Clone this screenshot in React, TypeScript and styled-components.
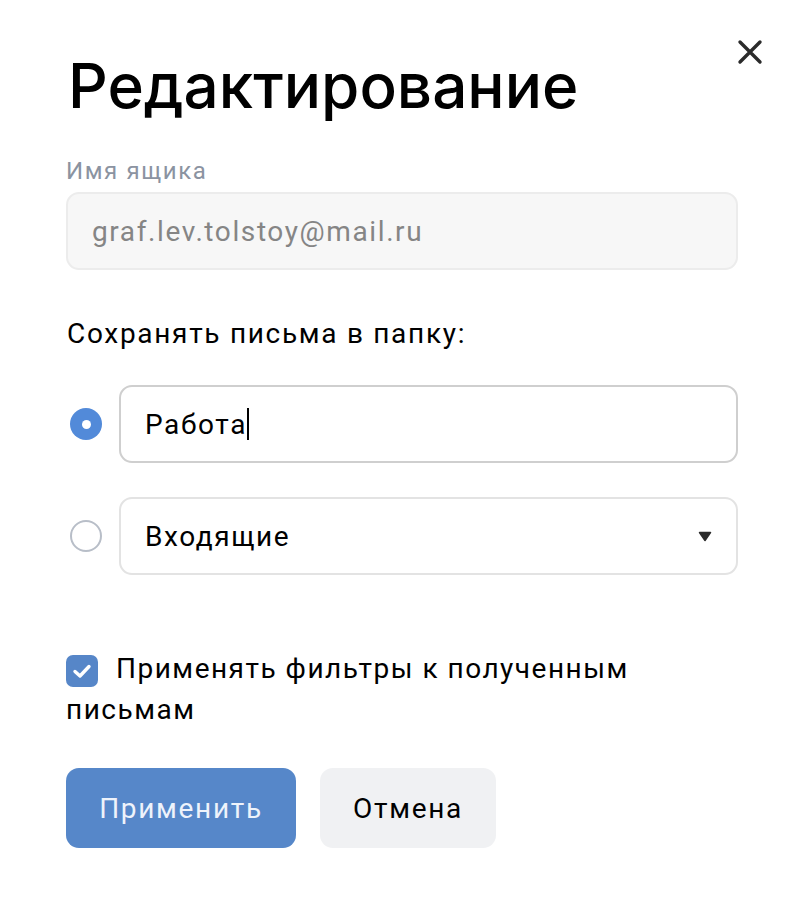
import React from "react";
import styled, { createGlobalStyle } from "styled-components";

const Global = createGlobalStyle`
  html, body { margin: 0; padding: 0; background: #ffffff; }
  body { font-family: Roboto, "Noto Sans", sans-serif; color: #000; }
  * { box-sizing: border-box; }
`;

const Dialog = styled.div`
  position: relative;
  width: 806px;
  height: 908px;
  padding: 46px 68px 0 66px;
  display: flex;
  flex-direction: column;
`;

const Close = styled.button`
  position: absolute;
  top: 38px;
  right: 42px;
  width: 28px;
  height: 28px;
  padding: 0;
  border: none;
  background: none;
  display: flex;
  align-items: center;
  justify-content: center;
`;

const Title = styled.h1`
  margin: 0 0 0 2px;
  font-family: Inter, Roboto, sans-serif;
  font-weight: 500;
  font-size: 62px;
  line-height: 80px;
  letter-spacing: 0;
  color: #000;
`;

const Label = styled.div`
  margin: 30px 0 0 0;
  font-size: 24px;
  line-height: 30px;
  letter-spacing: 1.6px;
  color: #8b93a1;
`;

const Field = styled.div<{ $variant?: "disabled" | "active" | "plain" }>`
  height: 78px;
  border-radius: 13px;
  display: flex;
  align-items: center;
  padding: 0 24px;
  font-size: 28px;
  letter-spacing: 1.6px;
  flex: 1;
  background: ${(p) => (p.$variant === "disabled" ? "#f7f7f7" : "#fff")};
  border: 2px solid
    ${(p) =>
      p.$variant === "disabled" ? "#ececec" : p.$variant === "active" ? "#cfcfcf" : "#e3e3e3"};
  color: ${(p) => (p.$variant === "disabled" ? "#858585" : "#000")};
`;

const EmailField = styled(Field)`
  margin-top: 6px;
  flex: none;
`;

const Section = styled.div`
  margin: 47px 0 0 1px;
  font-size: 28px;
  line-height: 34px;
  letter-spacing: 1.7px;
`;

const Options = styled.div`
  margin-top: 34px;
  display: flex;
  flex-direction: column;
  gap: 34px;
`;

const OptionRow = styled.div`
  display: flex;
  align-items: center;
  gap: 17px;
  padding-left: 4px;
`;

const Radio = styled.span<{ $checked?: boolean }>`
  width: 32px;
  height: 32px;
  border-radius: 50%;
  flex: none;
  display: flex;
  align-items: center;
  justify-content: center;
  background: ${(p) => (p.$checked ? "#528ad9" : "#fff")};
  border: ${(p) => (p.$checked ? "none" : "2px solid #b8bec8")};
  &::after {
    content: "";
    width: 9px;
    height: 9px;
    border-radius: 50%;
    background: #fff;
    display: ${(p) => (p.$checked ? "block" : "none")};
  }
`;

const Caret = styled.span`
  display: inline-block;
  width: 2px;
  height: 32px;
  background: #000;
  margin-left: 0;
`;

const Spacer = styled.span`
  flex: 1;
`;

const Filter = styled.div`
  margin-top: 73px;
  font-size: 28px;
  line-height: 41px;
  letter-spacing: 1.5px;
`;

const Check = styled.span`
  display: inline-flex;
  vertical-align: -2px;
  width: 32px;
  height: 32px;
  border-radius: 7px;
  background: #5686c8;
  align-items: center;
  justify-content: center;
  margin-right: 18px;
`;

const Buttons = styled.div`
  margin-top: 38px;
  display: flex;
  gap: 24px;
`;

const Button = styled.button<{ $primary?: boolean }>`
  height: 80px;
  border: none;
  border-radius: 13px;
  font-family: Roboto, sans-serif;
  font-size: 28px;
  letter-spacing: 1.7px;
  padding: 0;
  background: ${(p) => (p.$primary ? "#5687c9" : "#f0f1f3")};
  color: ${(p) => (p.$primary ? "#eef3fb" : "#000")};
  width: ${(p) => (p.$primary ? "230px" : "176px")};
`;

export default function App() {
  return (
    <>
      <Global />
      <Dialog>
        <Close aria-label="close">
          <svg width="26" height="26" viewBox="0 0 26 26">
            <path d="M3 3 L23 23 M23 3 L3 23" stroke="#2b2b2b" strokeWidth="3.4" strokeLinecap="round" />
          </svg>
        </Close>
        <Title>Редактирование</Title>
        <Label>Имя ящика</Label>
        <EmailField $variant="disabled">graf.lev.tolstoy@mail.ru</EmailField>
        <Section>Сохранять письма в папку:</Section>
        <Options>
          <OptionRow>
            <Radio $checked />
            <Field $variant="active">
              Работа<Caret />
            </Field>
          </OptionRow>
          <OptionRow>
            <Radio />
            <Field $variant="plain">
              Входящие
              <Spacer />
              <svg width="14" height="11" viewBox="0 0 14 11">
                <path d="M1.5 1.5 H12.5 L7 9.5 Z" fill="#2b2b2b" stroke="#2b2b2b" strokeWidth="1.5" strokeLinejoin="round" />
              </svg>
            </Field>
          </OptionRow>
        </Options>
        <Filter>
          <Check>
            <svg width="22" height="18" viewBox="0 0 22 18">
              <path d="M4 9.5 L9 14 L18 4.5" fill="none" stroke="#fff" strokeWidth="3.4" strokeLinecap="round" strokeLinejoin="round" />
            </svg>
          </Check>
          Применять фильтры к полученным письмам
        </Filter>
        <Buttons>
          <Button $primary>Применить</Button>
          <Button>Отмена</Button>
        </Buttons>
      </Dialog>
    </>
  );
}
